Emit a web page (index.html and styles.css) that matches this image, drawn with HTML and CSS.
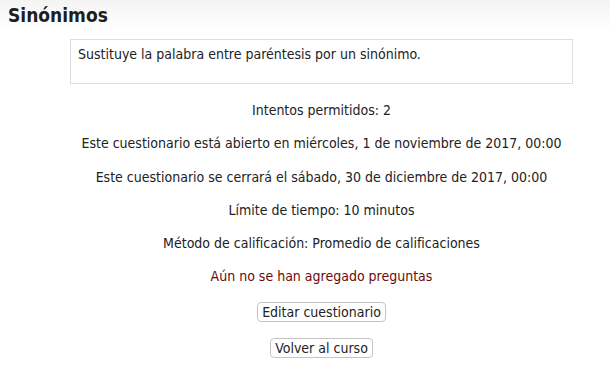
FILE: index.html
```html
<!DOCTYPE html>
<html lang="es">
<head>
    <meta charset="UTF-8">
    <title>Sinónimos</title>
    <link rel="stylesheet" href="styles.css">
</head>
<body>
    <div class="page-header">
        <h2>Sinónimos</h2>
    </div>
    <div class="quiz-info">
        <div class="intro-box">
            <p>Sustituye la palabra entre paréntesis por un sinónimo.</p>
        </div>
        <p>Intentos permitidos: 2</p>
        <p>Este cuestionario está abierto en miércoles, 1 de noviembre de 2017, 00:00</p>
        <p>Este cuestionario se cerrará el sábado, 30 de diciembre de 2017, 00:00</p>
        <p>Límite de tiempo: 10 minutos</p>
        <p>Método de calificación: Promedio de calificaciones</p>
        <p class="no-questions">Aún no se han agregado preguntas</p>
        <div class="btn-row"><button type="button">Editar cuestionario</button></div>
        <div class="btn-row"><button type="button">Volver al curso</button></div>
    </div>
</body>
</html>
```
FILE: styles.css
```css
body {
  margin: 0;
  font-family: "DejaVu Sans Condensed", "DejaVu Sans", sans-serif;
  font-size: 14px;
  color: #222;
  background: #fff;
}

.page-header {
  background: linear-gradient(#f4f4f4, #fff 30px);
  padding: 4px 8px 0;
  height: 34px;
  box-sizing: border-box;
}

.page-header h2 {
  margin: 0;
  font-size: 19px;
  font-weight: bold;
  color: #1e1e1e;
}

.quiz-info {
  margin: 5px 37px 0 70px;
  text-align: center;
}

.intro-box {
  border: 1px solid #ddd;
  text-align: left;
  height: 43px;
  padding: 0 7px;
  margin-bottom: 18px;
}

.quiz-info p {
  margin: 0 0 17.25px;
  line-height: 16px;
}

.quiz-info .intro-box p {
  margin: 6px 0 0;
}

.quiz-info .no-questions {
  color: #6b0a0a;
}

.btn-row {
  margin-bottom: 16px;
}

.btn-row button {
  font-family: inherit;
  font-size: 14px;
  color: #222;
  background: #fff;
  border: 1px solid #c4c4c4;
  border-radius: 4px;
  padding: 1px 4px;
  line-height: 16px;
}
```
